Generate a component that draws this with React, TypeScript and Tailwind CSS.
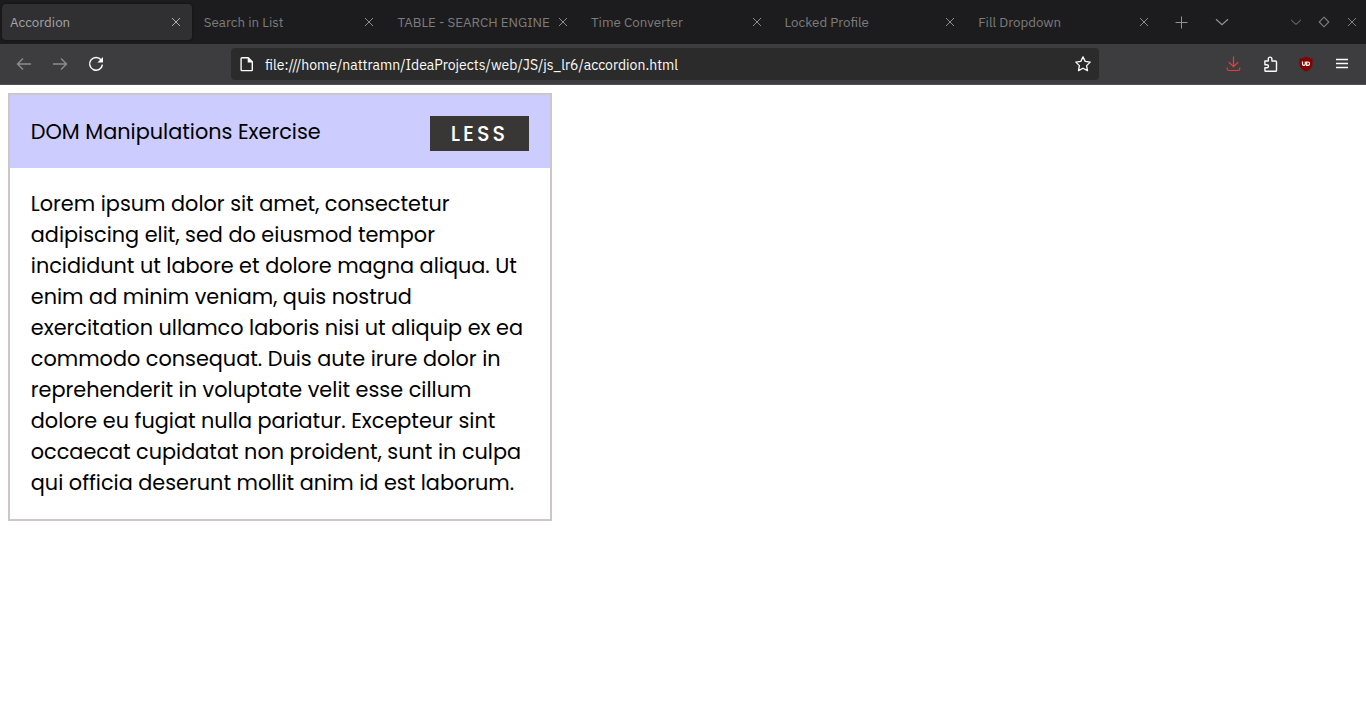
import { useState, type ReactNode } from 'react';

const tabs = ['Accordion', 'Search in List', 'TABLE - SEARCH ENGINE', 'Time Converter', 'Locked Profile', 'Fill Dropdown'];

const lines = [
  'Lorem ipsum dolor sit amet, consectetur',
  'adipiscing elit, sed do eiusmod tempor',
  'incididunt ut labore et dolore magna aliqua. Ut',
  'enim ad minim veniam, quis nostrud',
  'exercitation ullamco laboris nisi ut aliquip ex ea',
  'commodo consequat. Duis aute irure dolor in',
  'reprehenderit in voluptate velit esse cillum',
  'dolore eu fugiat nulla pariatur. Excepteur sint',
  'occaecat cupidatat non proident, sunt in culpa',
  'qui officia deserunt mollit anim id est laborum.',
];

function Icon({ children, className = '' }: { children: ReactNode; className?: string }) {
  return (
    <svg viewBox="0 0 16 16" width="16" height="16" fill="none" stroke="currentColor" className={`block shrink-0 ${className}`}>
      {children}
    </svg>
  );
}

function TabBar() {
  return (
    <div className="flex h-11 items-center bg-[#1c1c1e] pl-0.5 text-[#7c7c7d]">
      {tabs.map((title, i) => (
        <div key={title} className="w-[193.6px] shrink-0">
          <div
            className={
              i === 0
                ? 'flex h-9 w-[190px] items-center justify-between rounded bg-[#303032] pr-2 pl-2 text-[#a5a5a6] shadow-[0_0_3px_rgba(0,0,0,0.5)]'
                : 'flex h-9 w-[189.8px] items-center justify-between pr-2 pl-[8.2px]'
            }
          >
            <span className="text-[13.33px] leading-5 whitespace-nowrap">{title}</span>
            <Icon className={i === 0 ? 'text-[#b0b0b1]' : 'text-[#8c8c8d]'}>
              <path d="M4 4l8 8M12 4l-8 8" />
            </Icon>
          </div>
        </div>
      ))}
      <div className="flex flex-1 items-center pl-[9.4px] text-[#929293]">
        <Icon>
          <path d="M8.500 2.500v12M2.500 8.500h12" />
        </Icon>
        <Icon className="ml-6">
          <path d="M3 5.200l6 5.600 6-5.600" strokeWidth="1.2" />
        </Icon>
        <div className="ml-auto flex gap-3 pr-1.5 text-[#808081]">
          <Icon>
            <path d="M3.200 6l4.800 4.400L12.800 6" />
          </Icon>
          <Icon>
            <path d="M8 3.200L12.800 8 8 12.800 3.200 8z" strokeWidth="1.1" />
          </Icon>
          <Icon>
            <path d="M4 4l8 8M12 4l-8 8" />
          </Icon>
        </div>
      </div>
    </div>
  );
}

function Toolbar() {
  return (
    <div className="flex h-[41px] items-center border-b border-[#555356] bg-[#3d3d3f] px-4 text-[#fbfbfb]">
      <div className="flex w-[215px] gap-5">
        <Icon className="text-[#8c8c8d]">
          <path d="M1.500 8H15M7 2.500L1.500 8 7 13.500" strokeWidth="1.4" />
        </Icon>
        <Icon className="text-[#8c8c8d]">
          <path d="M1 8h13.500M9 2.500L14.500 8 9 13.500" strokeWidth="1.4" />
        </Icon>
        <Icon>
          <path d="M13.200 4A6.400 6.400 0 1 0 14.400 8.600" strokeWidth="1.5" />
          <path d="M15 1v5.600h-5.600z" fill="currentColor" stroke="none" />
        </Icon>
      </div>
      <div className="flex h-8 w-[868px] items-center rounded bg-[#2b2b2b] px-2">
        <Icon>
          <path d="M3 1.700h6.200l4.100 4.200v8q0 .7-.7.700H2.900q-.8 0-.8-.8V2.500q0-.8.9-.8z" strokeWidth="1.4" />
          <path d="M8.700 1.500v5h5z" fill="currentColor" stroke="none" />
        </Icon>
        <span className="mt-0.5 ml-[10px] text-[14px] leading-5">file:///home/nattramn/IdeaProjects/web/JS/js_lr6/accordion.html</span>
        <Icon className="ml-auto">
          <path
            d="M8 .9l2.200 4.500 5 .7-3.600 3.500.9 5L8 12.200l-4.500 2.400.9-5L.8 6.100l5-.7z"
            strokeWidth="1.3"
            strokeLinejoin="round"
          />
        </Icon>
      </div>
      <div className="ml-auto flex gap-5">
        <Icon className="text-[#f03a3a]">
          <path d="M7.500 .5v10M2.900 6.200L7.500 10.700l4.600-4.500M1.200 11.500v1.200q0 1.800 1.800 1.800h9q1.800 0 1.800-1.800v-1.200" strokeWidth="1.2" />
        </Icon>
        <Icon>
          <path
            d="M2.900 5h3.400V2.900a1.800 1.800 0 0 1 3.600 0V5h3.700q.9 0 .9.900v8.500q0 .9-.9.900H3.700q-.8 0-.8-.8v-2.700h2a1.500 1.500 0 0 0 0-3.100h-2V5z"
            strokeWidth="1.4"
            strokeLinejoin="round"
          />
        </Icon>
        <Icon>
          <path d="M8 .5c2 1.400 4 1.800 6.600 2v5.500c0 3.500-3.200 6-6.600 7.700C4.600 14 1.400 11.500 1.400 8V2.500C4 2.300 6 1.900 8 .5z" fill="#800000" stroke="#6c2424" strokeWidth=".5" />
          <path d="M4.500 5.500v2.500a1.400 1.400 0 0 0 2.800 0V5.500M8.700 6v3.300h1.200a1.650 1.650 0 0 0 0-3.300z" stroke="#fff" strokeWidth="1.2" />
        </Icon>
        <Icon>
          <path d="M2 3.500h12M2 7.500h12M2 11.500h12" strokeWidth="1.300" />
        </Icon>
      </div>
    </div>
  );
}

export default function App() {
  const [open, setOpen] = useState(true);
  return (
    <div className="flex h-[728px] flex-col overflow-hidden bg-white">
      <header className="font-['IBM_Plex_Sans','Roboto',sans-serif]">
        <TabBar />
        <Toolbar />
      </header>
      <main className="p-2 font-['Poppins','Inter',sans-serif] text-[20.8px] leading-[31px] text-black">
        <section className="w-[544px] border-2 border-[#ccc6c9]">
          <div className="flex h-[73px] items-center justify-between bg-[#ccccff] pr-[21px] pl-[20.8px]">
            <span>DOM Manipulations Exercise</span>
            <button
              onClick={() => setOpen(!open)}
              className="mt-[4px] h-[35px] w-[99px] bg-[#393735] text-center leading-[35px] font-medium tracking-[3px] text-white"
            >
              {open ? 'LESS' : 'MORE'}
            </button>
          </div>
          {open && (
            <p className="pt-5 pr-[20.8px] pb-[21px] pl-[20.8px]">
              {lines.map((line) => (
                <span key={line} className="block whitespace-nowrap">
                  {line}
                </span>
              ))}
            </p>
          )}
        </section>
      </main>
    </div>
  );
}
